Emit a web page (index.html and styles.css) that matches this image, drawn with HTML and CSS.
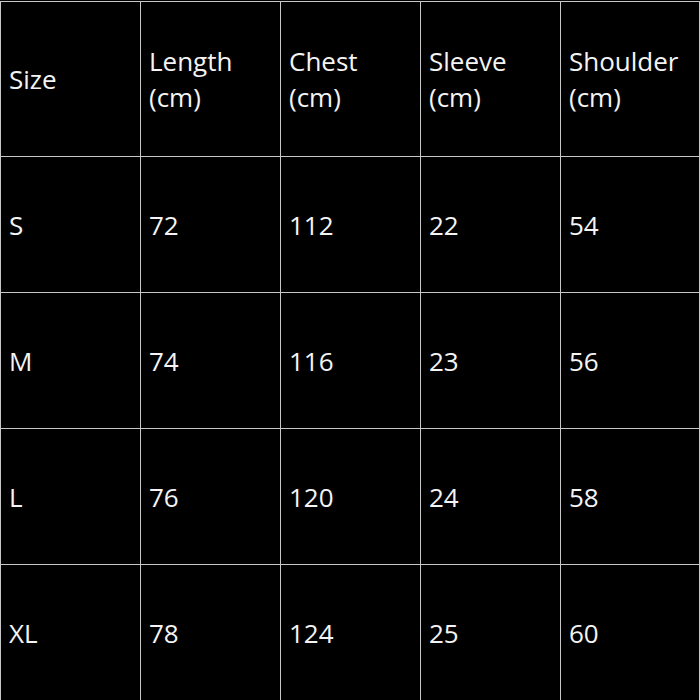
FILE: index.html
```html
<!DOCTYPE html>
<html>
<head>
<meta charset="utf-8">
<link rel="stylesheet" href="styles.css">
</head>
<body>
<table class="chart">
  <colgroup>
    <col class="c"><col class="c"><col class="c"><col class="c"><col class="c-last">
  </colgroup>
  <tr class="head">
    <td>Size</td><td>Length<br>(cm)</td><td>Chest<br>(cm)</td><td>Sleeve<br>(cm)</td><td>Shoulder<br>(cm)</td>
  </tr>
  <tr><td>S</td><td>72</td><td>112</td><td>22</td><td>54</td></tr>
  <tr><td>M</td><td>74</td><td>116</td><td>23</td><td>56</td></tr>
  <tr><td>L</td><td>76</td><td>120</td><td>24</td><td>58</td></tr>
  <tr><td>XL</td><td>78</td><td>124</td><td>25</td><td>60</td></tr>
</table>
</body>
</html>
```
FILE: styles.css
```css
html, body {
  margin: 0;
  padding: 0;
  background: #000;
}
.chart {
  border-collapse: collapse;
  width: 699px;
  table-layout: fixed;
  font-family: "Open Sans", sans-serif;
  font-size: 26px;
  line-height: 36px;
  color: #f4f4f4;
  margin-top: 1px;
}
.chart .c {
  width: 140px;
}
.chart .c-last {
  width: 139px;
}
.chart td {
  border: 1px solid #c8c8c8;
  padding: 0 8px;
  height: 135px;
  vertical-align: middle;
  white-space: nowrap;
}
.chart .head td {
  height: 154px;
}
```
